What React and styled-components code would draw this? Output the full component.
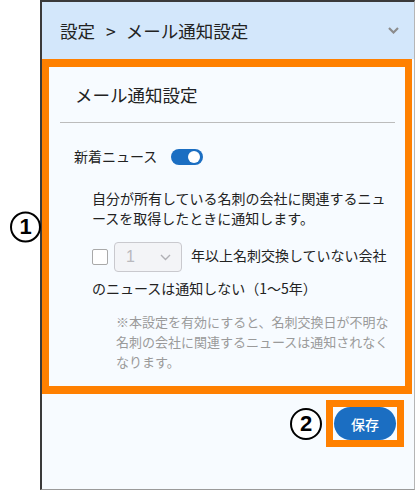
import React from 'react';
import styled, { createGlobalStyle } from 'styled-components';

const GlobalStyle = createGlobalStyle`
  html, body {
    margin: 0;
    padding: 0;
    background: #ffffff;
  }
  body {
    font-family: "Noto Sans CJK JP", "Noto Sans", sans-serif;
    color: #222;
  }
`;

const ORANGE = '#ff8000';
const BLUE = '#1b6ec2';

const Page = styled.div`
  width: 415px;
  height: 490px;
  padding-left: 40px;
  box-sizing: border-box;
`;

const Panel = styled.div`
  box-sizing: border-box;
  height: 490px;
  border-left: 2px solid #3a3a3a;
  border-top: 2px solid #3a3a3a;
  border-right: 1px solid #b5b5b5;
  border-bottom: 1px solid #9a9a9a;
  background: #f7fbff;
  display: flex;
  flex-direction: column;
`;

const Header = styled.div`
  height: 57px;
  background: #d3e7fb;
  display: flex;
  align-items: center;
  justify-content: space-between;
  padding: 0 15px 0 18px;
  font-size: 17.5px;
  color: #222;
`;

const Crumb = styled.span`
  display: flex;
  align-items: center;
`;

const CrumbSep = styled.span`
  margin: 0 10px 0 11px;
`;

const Highlight = styled.div`
  position: relative;
  margin-right: 2px;
  border: 7px solid ${ORANGE};
  border-top-width: 8px;
  border-bottom-width: 8px;
`;

const Marker = styled.span`
  position: ${({ $floating }) => ($floating ? 'absolute' : 'static')};
  left: -39px;
  top: 50%;
  transform: ${({ $floating }) => ($floating ? 'translateY(-50%)' : 'none')};
  width: ${({ $size }) => $size}px;
  height: ${({ $size }) => $size}px;
  box-sizing: border-box;
  border: 2px solid #000;
  border-radius: 50%;
  background: #fff;
  display: flex;
  align-items: center;
  justify-content: center;
  font-family: "Liberation Sans", Arial, sans-serif;
  font-weight: 700;
  font-size: 22px;
  color: #000;
  flex-shrink: 0;
`;

const Card = styled.div`
  background: #f7fbff;
  padding: 16px 10px 14px 11px;
`;

const CardTitle = styled.div`
  padding-left: 15px;
  font-size: 17.5px;
  line-height: 24px;
  margin-bottom: 15px;
`;

const Divider = styled.div`
  height: 1px;
  background: #bcbcbc;
`;

const ToggleRow = styled.div`
  margin-top: 25px;
  padding-left: 14px;
  display: flex;
  align-items: center;
  gap: 14px;
  font-size: 14px;
  line-height: 17px;
`;

const Toggle = styled.span`
  position: relative;
  width: 32px;
  height: 16px;
  border-radius: 8px;
  background: ${({ $on }) => ($on ? BLUE : '#bbb')};
  display: inline-block;

  &::after {
    content: '';
    position: absolute;
    top: 2px;
    left: ${({ $on }) => ($on ? '17px' : '2px')};
    width: 12px;
    height: 12px;
    border-radius: 50%;
    background: #fff;
  }
`;

const Body = styled.div`
  padding-left: 32px;
  width: 296px;
  font-size: 14px;
`;

const Paragraph = styled.p`
  margin: 23px 0 0;
  line-height: 20px;
`;

const OptionLine = styled.div`
  margin-top: 11px;
  line-height: 33px;
`;

const Checkbox = styled.span`
  display: inline-block;
  vertical-align: middle;
  width: 16px;
  height: 16px;
  box-sizing: border-box;
  border: 1px solid #a9a9a9;
  border-radius: 2px;
  background: #fff;
  margin-right: 6px;
`;

const Select = styled.span`
  display: inline-flex;
  vertical-align: middle;
  align-items: center;
  justify-content: space-between;
  box-sizing: border-box;
  width: 68px;
  height: 30px;
  padding: 0 10px 0 11px;
  border: 1px solid #c9c9ce;
  border-radius: 4px;
  background: #f3f4f7;
  color: #b9b9be;
  font-family: "Liberation Sans", Arial, sans-serif;
  font-size: 16px;
  line-height: 18px;
  margin-right: 9px;
`;

const Note = styled.p`
  margin: 7px 0 0 24px;
  width: 280px;
  font-size: 13px;
  line-height: 20px;
  color: #9a9a9a;
`;

const Footer = styled.div`
  display: flex;
  justify-content: flex-end;
  align-items: center;
  gap: 4px;
  padding: 6px 10px 0 0;
`;

const ButtonFrame = styled.div`
  border: 7px solid ${ORANGE};
  padding: 0 1px;
  display: flex;
`;

const SaveButton = styled.button`
  width: 62px;
  height: 33px;
  border: none;
  border-radius: 17px;
  background: ${BLUE};
  color: #fff;
  font-family: "Noto Sans CJK JP", sans-serif;
  font-size: 14px;
  font-weight: 500;
  cursor: pointer;
`;

const Chevron = ({ color, strokeWidth = 1.8 }) => (
  <svg width="11" height="7" viewBox="0 0 11 7" fill="none">
    <path d="M1 1l4.5 4.5L10 1" stroke={color} strokeWidth={strokeWidth} />
  </svg>
);

const App = () => (
  <>
    <GlobalStyle />
    <Page>
      <Panel>
        <Header>
          <Crumb>
            設定<CrumbSep>&gt;</CrumbSep>メール通知設定
          </Crumb>
          <Chevron color="#8c8c8c" strokeWidth={2.2} />
        </Header>

        <Highlight>
          <Marker $floating $size={31}>1</Marker>
          <Card>
            <CardTitle>メール通知設定</CardTitle>
            <Divider />
            <ToggleRow>
              <span>新着ニュース</span>
              <Toggle $on />
            </ToggleRow>
            <Body>
              <Paragraph>
                自分が所有している名刺の会社に関連するニュースを取得したときに通知します。
              </Paragraph>
              <OptionLine>
                <Checkbox />
                <Select>
                  <span>1</span>
                  <Chevron color="#b0b0b5" strokeWidth={1.4} />
                </Select>
                <span>年以上名刺交換していない会社のニュースは通知しない（1～5年）</span>
              </OptionLine>
              <Note>
                ※本設定を有効にすると、名刺交換日が不明な名刺の会社に関連するニュースは通知されなくなります。
              </Note>
            </Body>
          </Card>
        </Highlight>

        <Footer>
          <Marker $size={32}>2</Marker>
          <ButtonFrame>
            <SaveButton>保存</SaveButton>
          </ButtonFrame>
        </Footer>
      </Panel>
    </Page>
  </>
);

export default App;
